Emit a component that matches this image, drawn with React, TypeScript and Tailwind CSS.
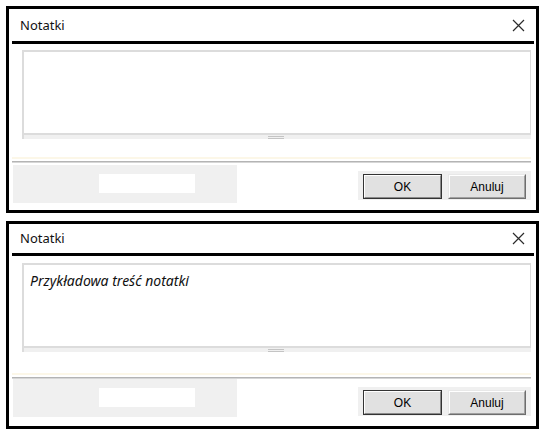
import React from "react";

type PanelProps = {
  titleH: number;
  gapTop: number;
  gapMid: number;
  grayMt: number;
  text?: string;
  mt: number;
};

function CloseIcon() {
  return (
    <svg width="13" height="13" viewBox="0 0 13 13" className="block">
      <path d="M1 1 L12 12 M12 1 L1 12" stroke="#2b2b2b" strokeWidth="1.2" fill="none" />
    </svg>
  );
}

function Panel({ titleH, gapTop, gapMid, grayMt, text, mt }: PanelProps) {
  return (
    <div
      className="ml-[6px] w-[533px] border-[3px] border-black bg-white flex flex-col"
      style={{ marginTop: mt }}
    >
      {/* Title */}
      <div className="flex items-center justify-between pl-[11px] pr-[11px]" style={{ height: titleH }}>
        <span className="text-[13px] text-[#111] leading-none" style={{ fontFamily: '"Noto Sans", "Open Sans", sans-serif' }}>
          Notatki
        </span>
        <CloseIcon />
      </div>
      <div className="h-[3px] bg-black ml-[3px] mr-[2px]" />
      <div style={{ height: gapTop }} />
      {/* Textarea */}
      <div className="ml-[13px] mr-[5px] flex flex-col">
        <div className="h-[85px] border-l-2 border-t-2 border-r border-b-2 border-[#dcdcdc] bg-white pl-[6px] pt-[3px]">
          {text && (
            <span
              className="italic text-[14px] text-[#111] leading-[20px]"
              style={{ fontFamily: '"Noto Sans", "Open Sans", sans-serif' }}
            >
              {text}
            </span>
          )}
        </div>
        <div className="h-[4px] bg-[#f0f0f0] border-l-2 border-[#dcdcdc] flex justify-center pt-[1px]">
          <div className="w-[16px] h-[3px] border-t border-b border-[#c4c4c4] -ml-[4px]" />
        </div>
      </div>
      <div style={{ height: gapMid }} />
      {/* Separator */}
      <div className="ml-[3px] mr-[5px] flex flex-col h-[6px]">
        <div className="h-[2px] bg-[#fcf7e8]" />
        <div className="h-[2px] bg-white" />
        <div className="h-[1px] bg-[#b4b4b4]" />
        <div className="h-[1px] bg-[#d6d6d6]" />
      </div>
      {/* Bottom */}
      <div className="h-[47px] flex justify-between items-start">
        <div className="ml-[4px] w-[224px] h-[38px] bg-[#f0f0f0] pl-[86px] pt-[9px]" style={{ marginTop: grayMt }}>
          <div className="w-[96px] h-[19px] bg-white" />
        </div>
        <div className="mr-[5px] mt-[8px] w-[173px] h-[29px] bg-[#f0f0f0] flex gap-[6px] pl-[5px] pt-[3px]">
          <div className="w-[79px] h-[25px] border border-[#333] bg-[#e1e1e1] flex">
            <div className="flex-1 border border-t-white border-l-white border-r-[#8a8a8a] border-b-[#8a8a8a] flex items-center justify-center">
              <span className="text-[12px] text-black leading-none" style={{ fontFamily: '"Liberation Sans", Arial, sans-serif' }}>
                OK
              </span>
            </div>
          </div>
          <div className="w-[78px] h-[25px] border border-t-[#e8e8e8] border-l-[#e8e8e8] border-r-[#6e6e6e] border-b-[#6e6e6e] bg-[#e1e1e1] flex">
            <div className="flex-1 border border-t-white border-l-white border-r-[#a0a0a0] border-b-[#a0a0a0] flex items-center justify-center">
              <span className="text-[12px] text-black leading-none" style={{ fontFamily: '"Liberation Sans", Arial, sans-serif' }}>
                Anuluj
              </span>
            </div>
          </div>
        </div>
      </div>
    </div>
  );
}

export default function App() {
  return (
    <div className="w-[550px] h-[437px] bg-white overflow-hidden">
      <Panel mt={6} titleH={32} gapTop={6} gapMid={18} grayMt={2} />
      <Panel mt={8} titleH={29} gapTop={7} gapMid={21} grayMt={0} text="Przykładowa treść notatki" />
    </div>
  );
}
